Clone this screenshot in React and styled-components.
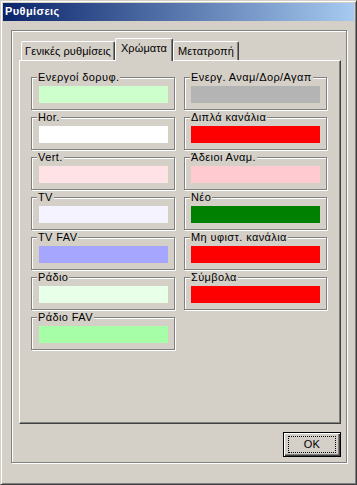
import React from 'react';
import styled, { createGlobalStyle } from 'styled-components';

const GlobalStyle = createGlobalStyle`
  html, body {
    margin: 0;
    padding: 0;
    background: #d4d0c8;
  }
  * {
    box-sizing: border-box;
  }
`;

const Window = styled.div`
  width: 357px;
  height: 485px;
  padding: 2px;
  background: #d4d0c8;
  border: 1px solid;
  border-color: #d4d0c8 #404040 #404040 #d4d0c8;
  box-shadow: inset 1px 1px 0 #fff, inset -1px -1px 0 #808080;
  font-family: "Liberation Sans", Arial, sans-serif;
  font-size: 11px;
  line-height: 13px;
  letter-spacing: 0.4px;
  color: #000;
  display: flex;
  flex-direction: column;
`;

const TitleBar = styled.div`
  height: 18px;
  padding: 2px 0 0 2px;
  background: linear-gradient(to right, #0a246a, #a6caf0);
  color: #fff;
  font-weight: bold;
`;

const Frame = styled.div`
  width: 336px;
  height: 433px;
  margin: 9px 0 0 8px;
  padding: 7px 0 0 7px;
  border: 1px solid #808080;
  box-shadow: inset 1px 1px 0 #fff, 1px 1px 0 #fff;
  display: flex;
  flex-direction: column;
`;

const TabRow = styled.div`
  display: flex;
  align-items: flex-end;
  height: 22px;
  padding-left: 2px;
`;

const Tab = styled.div`
  position: relative;
  width: ${({ $w }) => $w}px;
  height: ${({ $active }) => ($active ? 23 : 19)}px;
  margin-bottom: ${({ $active }) => ($active ? -1 : 0)}px;
  padding-top: 3px;
  text-align: center;
  white-space: nowrap;
  letter-spacing: 0.1px;
  background: #d4d0c8;
  border-top: 1px solid #fff;
  border-left: 1px solid #fff;
  border-right: 1px solid #404040;
  border-radius: 2px 2px 0 0;
  box-shadow: inset -1px 0 0 #808080;
  z-index: ${({ $active }) => ($active ? 2 : 1)};
`;

const Panel = styled.div`
  width: 322px;
  height: 364px;
  padding: 16px 0 0 11px;
  border: 1px solid;
  border-color: #fff #404040 #404040 #fff;
  box-shadow: inset -1px -1px 0 #808080;
  display: grid;
  grid-template-columns: 144px 143px;
  column-gap: 9px;
  align-items: start;
`;

const Column = styled.div`
  display: flex;
  flex-direction: column;
  gap: 7px;
`;

const Group = styled.div`
  position: relative;
  height: 33px;
  padding: 8px 0 0 ${({ $pad }) => $pad}px;
  border: 1px solid #808080;
  box-shadow: inset 1px 1px 0 #fff, 1px 1px 0 #fff;
`;

const Legend = styled.span`
  position: absolute;
  top: -7px;
  left: 5px;
  padding: 0 1px;
  background: #d4d0c8;
  white-space: nowrap;
`;

const Swatch = styled.div`
  width: 129px;
  height: 17px;
  background: ${({ $color }) => $color};
`;

const Footer = styled.div`
  display: flex;
  justify-content: flex-end;
  width: 322px;
  margin-top: 8px;
`;

const Button = styled.div`
  width: 58px;
  height: 25px;
  padding: 3px 4px;
  border: 1px solid #000;
  box-shadow: inset 1px 1px 0 #fff, inset -1px -1px 0 #404040, inset -2px -2px 0 #808080;
  display: flex;
`;

const FocusRing = styled.div`
  flex: 1;
  border: 1px dotted #000;
  display: flex;
  align-items: center;
  justify-content: center;
`;

const left = [
  ['Ενεργοί δορυφ.', '#ccffcc'],
  ['Hor.', '#ffffff'],
  ['Vert.', '#ffe2e6'],
  ['TV', '#f5f3ff'],
  ['TV FAV', '#a6a6ff'],
  ['Ράδιο', '#e8ffe8'],
  ['Ράδιο FAV', '#a6ffa6'],
];

const right = [
  ['Ενεργ. Αναμ/Δορ/Αγαπ', '#b4b4b4'],
  ['Διπλά κανάλια', '#ff0000'],
  ['Άδειοι Αναμ.', '#ffcbd0'],
  ['Νέο', '#008000'],
  ['Μη υφιστ. κανάλια', '#ff0000'],
  ['Σύμβολα', '#ff0000'],
];

const ColorGroup = ({ label, color, pad }) => (
  <Group $pad={pad}>
    <Legend>{label}</Legend>
    <Swatch $color={color} />
  </Group>
);

export default function App() {
  return (
    <>
      <GlobalStyle />
      <Window>
        <TitleBar>Ρυθμίσεις</TitleBar>
        <Frame>
          <TabRow>
            <Tab $w={94}>Γενικές ρυθμίσεις</Tab>
            <Tab $w={58} $active>Χρώματα</Tab>
            <Tab $w={66}>Μετατροπή</Tab>
          </TabRow>
          <Panel>
            <Column>
              {left.map(([label, color]) => (
                <ColorGroup key={label} label={label} color={color} pad={7} />
              ))}
            </Column>
            <Column>
              {right.map(([label, color]) => (
                <ColorGroup key={label} label={label} color={color} pad={6} />
              ))}
            </Column>
          </Panel>
          <Footer>
            <Button>
              <FocusRing>OK</FocusRing>
            </Button>
          </Footer>
        </Frame>
      </Window>
    </>
  );
}
